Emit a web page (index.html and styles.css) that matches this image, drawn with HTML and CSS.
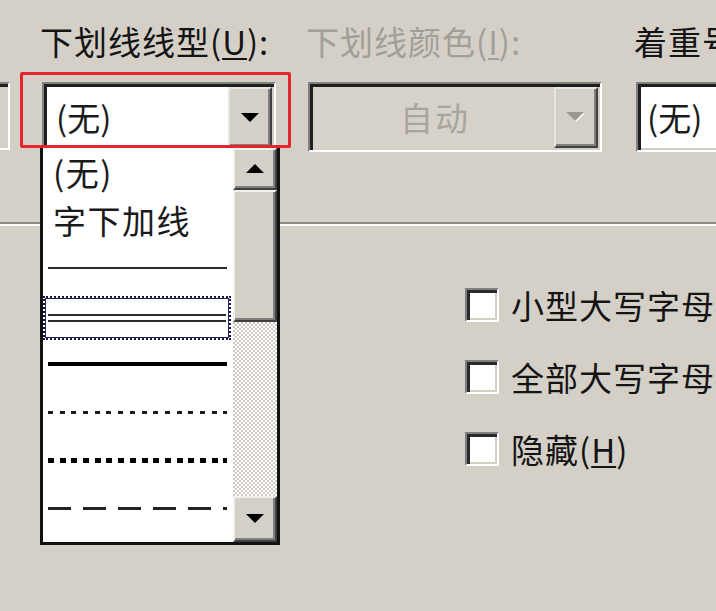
FILE: index.html
```html
<!DOCTYPE html>
<html lang="zh-CN">
<head>
<meta charset="utf-8">
<title>字体</title>
<link rel="stylesheet" href="styles.css">
</head>
<body>
<div class="dialog">
  <div class="top">
    <div class="col col-stub">
      <div class="label"></div>
      <div class="combo stub"></div>
    </div>
    <div class="col col-u">
      <div class="label">下划线线型(<u>U</u>):</div>
      <div class="combo">
        <span class="value">(无)</span>
        <span class="btn"><svg width="18" height="10" viewBox="0 0 18 10"><polygon points="0,0 18,0 9,9" fill="#000"/></svg></span>
      </div>
    </div>
    <div class="col col-color">
      <div class="label disabled">下划线颜色(<u>I</u>):</div>
      <div class="combo combo-disabled">
        <span class="value value-center">自动</span>
        <span class="btn"><svg width="20" height="11" viewBox="0 0 20 11"><polygon points="1,1 19,1 10,10" fill="#fff"/><polygon points="0,0 18,0 9,9" fill="#9c9890"/></svg></span>
      </div>
    </div>
    <div class="col col-emph">
      <div class="label">着重号</div>
      <div class="combo">
        <span class="value value-tight">(无)</span>
      </div>
    </div>
  </div>

  <div class="groove"></div>

  <div class="effects">
    <div class="check-row"><span class="checkbox"></span><span class="check-label">小型大写字母</span></div>
    <div class="check-row"><span class="checkbox"></span><span class="check-label">全部大写字母</span></div>
    <div class="check-row"><span class="checkbox"></span><span class="check-label">隐藏(<u>H</u>)</span></div>
  </div>

  <div class="dropdown">
    <div class="items">
      <div class="item"><span class="item-text">(无)</span></div>
      <div class="item"><span class="item-text">字下加线</span></div>
      <div class="item"><span class="line line-single"></span></div>
      <div class="item item-selected"><div class="sel"><span class="line line-double"></span></div></div>
      <div class="item"><span class="line line-thick"></span></div>
      <div class="item"><span class="line line-dash-small"></span></div>
      <div class="item"><span class="line line-dots"></span></div>
      <div class="item"><span class="line line-dashed"></span></div>
    </div>
    <div class="scrollbar">
      <div class="sb-btn sb-up"><svg width="18" height="10" viewBox="0 0 18 10"><polygon points="9,0 18,9 0,9" fill="#000"/></svg></div>
      <div class="sb-thumb"></div>
      <div class="sb-track"></div>
      <div class="sb-btn sb-down"><svg width="18" height="10" viewBox="0 0 18 10"><polygon points="0,0 18,0 9,9" fill="#000"/></svg></div>
    </div>
  </div>

  <div class="highlight"></div>
</div>
</body>
</html>
```

FILE: styles.css
```css
html, body {
  margin: 0;
  padding: 0;
  background: #d4d0c8;
}

body {
  width: 716px;
  height: 611px;
  overflow: hidden;
  font-family: "Noto Sans CJK SC", "Noto Sans", sans-serif;
  color: #141414;
}

.dialog {
  position: relative;
  width: 716px;
  height: 611px;
}

.top {
  display: flex;
  margin-left: -40px;
}

.col {
  display: flex;
  flex-direction: column;
  flex: none;
}

.col-stub { width: 50px; }
.col-u { width: 234px; margin-left: 32px; }
.col-color { width: 294px; margin-left: 32px; }
.col-emph { width: 130px; margin-left: 34px; }

.label {
  height: 82px;
  box-sizing: border-box;
  padding-top: 24px;
  font-size: 33px;
  line-height: 34px;
  white-space: nowrap;
  letter-spacing: 1px;
  margin-left: -2px;
}

.label u,
.check-label u {
  text-decoration-thickness: 2px;
  text-underline-offset: 3px;
}

.disabled {
  color: #a29f98;
}

.combo {
  position: relative;
  height: 70px;
  box-sizing: border-box;
  display: flex;
  align-items: center;
  background: #fff;
  border: 2px solid;
  border-color: #808080 #fff #fff #808080;
  box-shadow: inset 3px 3px 0 #1e1e1e, inset -2px -2px 0 #d4d0c8;
}

.stub {
  background: #d4d0c8;
  height: 68px;
}

.combo-disabled {
  background: #d6d2ca;
}

.value {
  padding-left: 12px;
  padding-top: 0;
  font-size: 33px;
  line-height: 40px;
  color: #1c1c1c;
}

.value-tight {
  padding-left: 9px;
}

.value-center {
  flex: 1;
  text-align: center;
  padding-left: 0;
  padding-right: 40px;
  color: #a8a59e;
  letter-spacing: 2px;
}

.btn {
  position: absolute;
  right: 2px;
  top: 3px;
  bottom: 2px;
  width: 44px;
  display: flex;
  align-items: center;
  justify-content: center;
  background: #d4d0c8;
  box-sizing: border-box;
  border: 2px solid;
  border-color: #e8e6e2 #404040 #404040 #e8e6e2;
  box-shadow: inset -2px -2px 0 #808080;
}

.groove {
  margin-top: 70px;
  height: 2px;
  background: #8e8b84;
  border-bottom: 2px solid #fbfaf8;
}

.effects {
  margin-top: 43px;
  margin-left: 465px;
  display: flex;
  flex-direction: column;
}

.check-row {
  height: 72px;
  display: flex;
  align-items: center;
  gap: 12px;
}

.checkbox {
  flex: none;
  width: 34px;
  height: 34px;
  box-sizing: border-box;
  background: #fff;
  border: 2px solid;
  border-color: #808080 #fff #fff #808080;
  box-shadow: inset 3px 3px 0 #2a2a2a, inset -2px -2px 0 #d4d0c8;
}

.check-label {
  font-size: 33px;
  line-height: 40px;
  white-space: nowrap;
  letter-spacing: 1px;
}

/* dropdown list (overlays the dialog) */
.dropdown {
  position: absolute;
  left: 40px;
  top: 145px;
  width: 240px;
  height: 400px;
  box-sizing: border-box;
  border: 3px solid #111;
  background: #fff;
  display: flex;
  z-index: 2;
}

.items {
  flex: 1;
  display: flex;
  flex-direction: column;
}

.item {
  height: 48px;
  flex: none;
  display: flex;
  align-items: center;
  padding: 0 6px 0 5px;
  box-sizing: border-box;
}

.item-text {
  padding-left: 5px;
  font-size: 33px;
  line-height: 40px;
  white-space: nowrap;
  color: #1a1a1a;
  letter-spacing: 1.5px;
}

.line {
  display: block;
  width: 100%;
}

.line-single {
  height: 2px;
  background: #2a2a2a;
}

.line-double {
  height: 4px;
  border-top: 2px solid #2a2a2a;
  border-bottom: 2px solid #2a2a2a;
}

.line-thick {
  height: 4px;
  background: #000;
}

.line-dash-small {
  height: 3px;
  background: repeating-linear-gradient(90deg, #1a1a1a 0 5px, transparent 5px 11.7px);
}

.line-dots {
  height: 5px;
  background: repeating-linear-gradient(90deg, #000 0 6px, transparent 6px 11.7px);
}

.line-dashed {
  height: 3px;
  background: repeating-linear-gradient(90deg, #222 0 23px, transparent 23px 35px);
}

.item-selected {
  padding: 4px 2px 0 0;
  align-items: stretch;
}

.sel {
  flex: 1;
  display: flex;
  align-items: center;
  padding: 0 3px;
  border: 2px dotted #151540;
  box-shadow: inset 0 0 0 1px #24246a;
}

/* scrollbar */
.scrollbar {
  width: 44px;
  flex: none;
  display: flex;
  flex-direction: column;
  background-color: #fff;
  background-image: repeating-conic-gradient(#cfcbc3 0 25%, #fff 0 50%);
  background-size: 4px 4px;
}

.sb-btn,
.sb-thumb {
  flex: none;
  box-sizing: border-box;
  background: #d4d0c8;
  border: 2px solid;
  border-color: #f2f0ec #404040 #404040 #f2f0ec;
  box-shadow: inset -2px -2px 0 #808080;
}

.sb-btn {
  display: flex;
  align-items: center;
  justify-content: center;
}

.sb-up { height: 42px; }
.sb-thumb { height: 132px; }
.sb-track { flex: 1; }
.sb-down { height: 46px; }

.highlight {
  position: absolute;
  left: 20px;
  top: 72px;
  width: 271px;
  height: 76px;
  box-sizing: border-box;
  border: 3px solid #e3262b;
  border-radius: 2px;
  z-index: 3;
}
```
